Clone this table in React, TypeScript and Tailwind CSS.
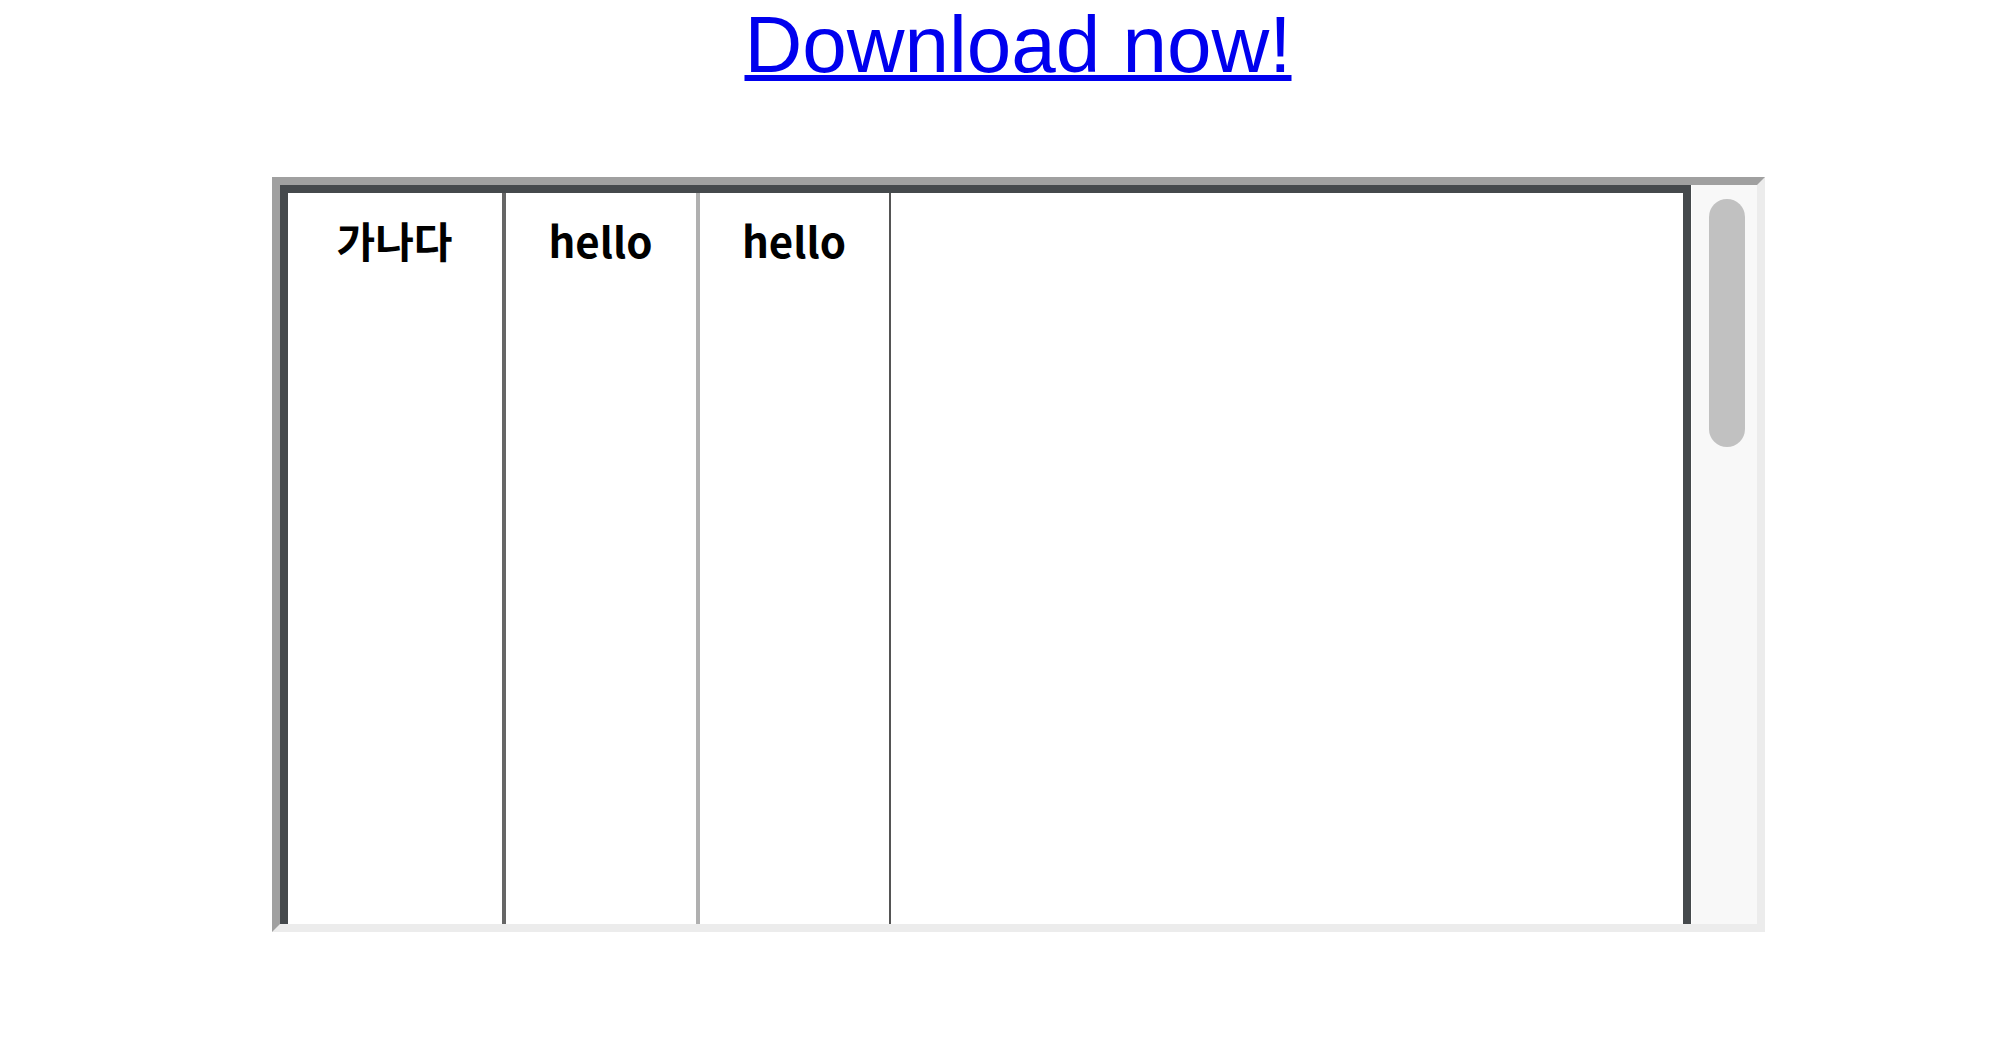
import React from 'react';

const columns = [
  { label: '가나다', className: 'w-[218px] border-r-[4px] border-[#666666]' },
  { label: 'hello', className: 'w-[194px] border-r-[4px] border-[#b0b0b0]' },
  { label: 'hello', className: 'w-[191px] border-r-[2px] border-[#555555]' },
  { label: '', className: 'flex-1' },
];

const App: React.FC = () => {
  return (
    <div className="min-h-screen bg-white pl-[36px] flex flex-col items-center">
      {/* Download link */}
      <a
        href="#"
        className="mt-0 text-[80px] leading-[1.117] text-[#0000ee] underline decoration-[6px] underline-offset-[3px] font-['Liberation_Sans',Arial,sans-serif]"
      >
        Download now!
      </a>

      {/* Framed scroll area */}
      <div className="mt-[88px] w-[1493px] h-[755px] border-8 border-t-[#a0a0a0] border-l-[#a0a0a0] border-r-[#ececec] border-b-[#ececec] flex">
        <div className="flex-1 overflow-hidden">
          <div className="h-[1000px] flex border-8 border-b-0 border-[#45494c] bg-white">
            {columns.map((col, i) => (
              <div
                key={i}
                className={`h-full pt-[16px] text-center font-bold text-[42px] leading-[normal] text-black font-['Noto_Sans_CJK_KR','Noto_Sans',sans-serif] ${col.className}`}
              >
                {col.label}
              </div>
            ))}
          </div>
        </div>

        {/* Scrollbar */}
        <div className="w-[66px] h-full bg-[#f8f8f8] border-l border-[#ffffff] pl-[17px] pt-[14px]">
          <div className="w-[36px] h-[248px] rounded-full bg-[#c1c1c1]" />
        </div>
      </div>
    </div>
  );
};

export default App;
